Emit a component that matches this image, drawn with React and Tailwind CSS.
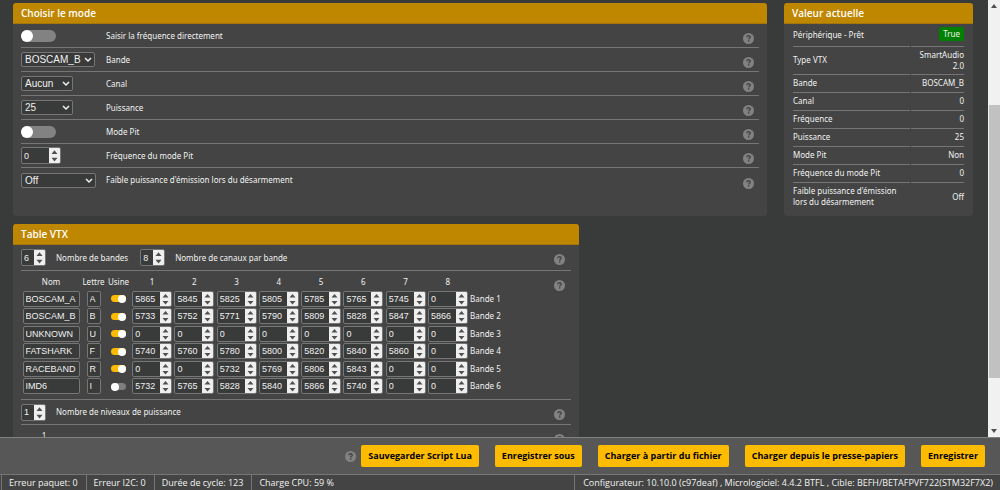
import { useState } from 'react';

const BANDS = [
    { name: 'BOSCAM_A', letter: 'A', factory: true, freqs: [5865, 5845, 5825, 5805, 5785, 5765, 5745, 0] },
    { name: 'BOSCAM_B', letter: 'B', factory: true, freqs: [5733, 5752, 5771, 5790, 5809, 5828, 5847, 5866] },
    { name: 'UNKNOWN', letter: 'U', factory: true, freqs: [0, 0, 0, 0, 0, 0, 0, 0] },
    { name: 'FATSHARK', letter: 'F', factory: true, freqs: [5740, 5760, 5780, 5800, 5820, 5840, 5860, 0] },
    { name: 'RACEBAND', letter: 'R', factory: true, freqs: [0, 0, 5732, 5769, 5806, 5843, 0, 0] },
    { name: 'IMD6', letter: 'I', factory: false, freqs: [5732, 5765, 5828, 5840, 5866, 5740, 0, 0] },
];

const CURRENT = [
    ['Type VTX', 'SmartAudio 2.0'],
    ['Bande', 'BOSCAM_B'],
    ['Canal', '0'],
    ['Fréquence', '0'],
    ['Puissance', '25'],
    ['Mode Pit', 'Non'],
    ['Fréquence du mode Pit', '0'],
];

const field = 'border border-[#757675] rounded-[2px] bg-[#393a3a] text-[#f0f0f0] font-["Liberation_Sans",sans-serif]';

function Help() {
    return (
        <svg viewBox="0 0 12 12" className="w-[11px] h-[11px] shrink-0" role="img" aria-label="Aide">
            <circle cx="6" cy="6" r="6" fill="#818281" />
            <path d="M4.1 4.7C4.2 3.5 5 3 6 3c1.100 0 1.900.6 1.900 1.600C7.900 5.700 6.200 5.700 6.200 7" fill="none" stroke="#434443" strokeWidth="1.500" />
            <rect x="5.400" y="7.900" width="1.600" height="1.500" fill="#434443" />
        </svg>
    );
}

function Toggle({ id, label, defaultChecked = false, small = false }) {
    return (
        <input
            id={id}
            type="checkbox"
            role="switch"
            aria-label={label}
            defaultChecked={defaultChecked}
            className={
                small
                    ? 'appearance-none block mx-auto w-[15px] h-[7px] rounded-full bg-[#7d7e7d] checked:bg-[#ffbb00] before:content-[""] before:block before:w-2 before:h-2 before:rounded-full before:bg-white checked:before:ml-[7px]'
                    : 'appearance-none block w-[35px] h-[12px] rounded-full bg-[#818281] checked:bg-[#ffbb00] before:content-[""] before:block before:w-[12px] before:h-[12px] before:rounded-full before:bg-white checked:before:ml-[23px]'
            }
        />
    );
}

function Select({ id, options, className }) {
    return (
        <div className={`relative ${className}`}>
            <select id={id} className={`${field} block appearance-none w-full h-[15px] pl-[3px] text-[10px] leading-[13px]`}>
                {options.map((o) => (
                    <option key={o}>{o}</option>
                ))}
            </select>
            <svg viewBox="0 0 8 6" className="absolute right-[3px] top-[5px] w-[8px] h-[6px] pointer-events-none">
                <path d="M1 1l3 3 3-3" fill="none" stroke="#f0f0f0" strokeWidth="1.500" />
            </svg>
        </div>
    );
}

function NumberInput({ id, label, value, className }) {
    const [val, setVal] = useState(value);

    return (
        <div className={`${field} flex overflow-hidden ${className}`}>
            <input
                id={id}
                type="number"
                aria-label={label}
                value={val}
                onChange={(e) => setVal(e.target.value)}
                className="appearance-none [-moz-appearance:textfield] [&::-webkit-inner-spin-button]:appearance-none flex-1 min-w-0 h-full pl-[2px] text-[9px] bg-transparent outline-none"
            />
            <svg viewBox="0 0 11 14" preserveAspectRatio="none" className="w-[11px] h-full shrink-0 bg-[#efefef]">
                <path d="M2.500 5.500L5.500 2 8.500 5.500zM2.500 9L5.500 12.500 8.500 9z" fill="#505050" />
            </svg>
        </div>
    );
}

function Panel({ title, className, children }) {
    return (
        <section className={`rounded-[3px] bg-[#434443] overflow-hidden ${className}`}>
            <h2 className='h-[21px] px-2 flex items-center bg-[#bf8600] border-b border-[#a37606] text-[10px] font-semibold font-["Open_Sans",sans-serif] text-white'>{title}</h2>
            <div className="px-2">{children}</div>
        </section>
    );
}

function ModeRow({ id, label, children, last }) {
    return (
        <div className={`h-[24px] flex items-center ${last ? '' : 'border-b border-[#757675]'}`}>
            <div className="w-[85px] shrink-0">{children}</div>
            <label htmlFor={id} className="flex-1">{label}</label>
            <div className="pt-[6px] pr-[5px]"><Help /></div>
        </div>
    );
}

function ModePanel() {
    return (
        <Panel title="Choisir le mode" className="flex-[754] h-[213px]">
            <ModeRow id="direct" label="Saisir la fréquence directement"><Toggle id="direct" /></ModeRow>
            <ModeRow id="band" label="Bande"><Select id="band" className="w-[74px]" options={['BOSCAM_B', 'BOSCAM_A', 'FATSHARK']} /></ModeRow>
            <ModeRow id="channel" label="Canal"><Select id="channel" className="w-[52px]" options={['Aucun', '1', '2']} /></ModeRow>
            <ModeRow id="power" label="Puissance"><Select id="power" className="w-[52px]" options={['25', '200']} /></ModeRow>
            <ModeRow id="pit" label="Mode Pit"><Toggle id="pit" /></ModeRow>
            <ModeRow id="pitfreq" label="Fréquence du mode Pit"><NumberInput id="pitfreq" value={0} className="w-[40px] h-[17px]" /></ModeRow>
            <ModeRow id="disarm" label="Faible puissance d'émission lors du désarmement" last>
                <Select id="disarm" className="w-[75px]" options={['Off', 'On']} />
            </ModeRow>
        </Panel>
    );
}

function CurrentPanel() {
    const line = 'border-b border-[#757675] pb-[2px]';
    return (
        <Panel title="Valeur actuelle" className="flex-[189] h-[213px]">
            <table className="w-full table-fixed border-separate border-spacing-x-[1px] border-spacing-y-0 leading-[11px]">
                <colgroup>
                    <col className="w-[69%]" />
                    <col />
                </colgroup>
                <tbody>
                    <tr className="h-[23px]">
                        <td className={line}>Périphérique - Prêt</td>
                        <td className={`${line} text-right`}>
                            <span className="inline-block rounded-[2px] bg-[#008000] px-[4px] leading-[14px]">True</span>
                        </td>
                    </tr>
                    {CURRENT.map(([label, value], i) => (
                        <tr key={label} className={i === 0 ? 'h-[28px]' : 'h-[18px]'}>
                            <td className={line}>{label}</td>
                            <td className={`${line} text-right`}>{value}</td>
                        </tr>
                    ))}
                    <tr className="h-[26px]">
                        <td>Faible puissance d'émission lors du désarmement</td>
                        <td className="text-right">Off</td>
                    </tr>
                </tbody>
            </table>
        </Panel>
    );
}

function TablePanel() {
    return (
        <Panel title="Table VTX" className="w-[59%] h-[400px]">
            <div className="h-[26px] flex items-center border-b border-[#757675]">
                <NumberInput id="bands" value={6} className="w-[25px] h-[17px]" />
                <label htmlFor="bands" className="ml-[10px] mr-[12px]">Nombre de bandes</label>
                <NumberInput id="channels" value={8} className="w-[25px] h-[17px]" />
                <label htmlFor="channels" className="ml-[10px] flex-1">Nombre de canaux par bande</label>
                <div className="pt-[4px] pr-[6px]"><Help /></div>
            </div>

            <div className="flex justify-between border-b border-[#757675] pt-[3px] pb-[4px]">
                <table className="table-fixed w-[490px] h-[121px] text-center">
                    <colgroup>
                        <col className="w-[60px]" />
                        <col className="w-[25px]" />
                        <col className="w-[25px]" />
                        <col span="8" />
                        <col className="w-[42px]" />
                    </colgroup>
                    <thead>
                        <tr className="h-[16px] whitespace-nowrap">
                            <th className="font-normal">Nom</th>
                            <th className="font-normal">Lettre</th>
                            <th className="font-normal">Usine</th>
                            {[1, 2, 3, 4, 5, 6, 7, 8].map((n) => (
                                <th key={n} className="font-normal">{n}</th>
                            ))}
                            <td />
                        </tr>
                    </thead>
                    <tbody>
                        {BANDS.map((band, i) => (
                            <tr key={band.name}>
                                <td>
                                    <input aria-label={`Nom ${i + 1}`} defaultValue={band.name} className={`${field} block mx-auto w-[57px] h-[16px] pl-[2px] text-[9px]`} />
                                </td>
                                <td>
                                    <input aria-label={`Lettre ${i + 1}`} defaultValue={band.letter} className={`${field} block mx-auto w-[14px] h-[16px] pl-[2px] text-[9px]`} />
                                </td>
                                <td>
                                    <Toggle small label={`Usine ${i + 1}`} defaultChecked={band.factory} />
                                </td>
                                {band.freqs.map((f, n) => (
                                    <td key={n}>
                                        <NumberInput label={`Bande ${i + 1} canal ${n + 1}`} value={f} className="mx-auto w-[40px] h-[16px]" />
                                    </td>
                                ))}
                                <td className="text-left pl-px whitespace-nowrap">Bande {i + 1}</td>
                            </tr>
                        ))}
                    </tbody>
                </table>
                <div className="pt-[6px] pr-[6px]"><Help /></div>
            </div>

            <div className="h-[25px] flex items-center border-b border-[#757675]">
                <NumberInput id="levels" value={1} className="w-[25px] h-[17px]" />
                <label htmlFor="levels" className="ml-[10px] flex-1">Nombre de niveaux de puissance</label>
                <div className="pt-[4px] pr-[6px]"><Help /></div>
            </div>
            <div className="flex justify-between pt-[5px] pr-[6px]">
                <span className="w-[46px] text-center">1</span>
                <div className="pt-[4px]"><Help /></div>
            </div>
        </Panel>
    );
}

function ScrollBar() {
    return (
        <div className="w-[12px] shrink-0 bg-[#f1f1f1] flex flex-col items-center py-[4px]">
            <svg viewBox="0 0 6 4" className="w-[6px] h-[4px]"><path d="M0 4L3 0 6 4z" fill="#505050" /></svg>
            <div className="flex-[97]" />
            <div className="flex-[273] w-[11px] bg-[#c1c1c1]" />
            <div className="flex-[51]" />
            <svg viewBox="0 0 6 4" className="w-[6px] h-[4px]"><path d="M0 0L3 4 6 0z" fill="#505050" /></svg>
        </div>
    );
}

function Footer() {
    return (
        <footer className='shrink-0 text-[9px] font-["Open_Sans",sans-serif]'>
            <div className="h-[37px] pr-[15px] flex items-center justify-end gap-[16px] border-t border-[#818281] bg-[#565756]">
                <div className="flex items-center gap-[5px]">
                    <Help />
                    <Button>Sauvegarder Script Lua</Button>
                </div>
                <Button>Enregistrer sous</Button>
                <Button>Charger à partir du fichier</Button>
                <Button>Charger depuis le presse-papiers</Button>
                <Button>Enregistrer</Button>
            </div>
            <div className="h-[16px] pl-px flex border-t border-[#757675] bg-[#434443] whitespace-nowrap leading-[15px]">
                {['Erreur paquet: 0', 'Erreur I2C: 0', 'Durée de cycle: 123', 'Charge CPU: 59 %'].map((s) => (
                    <span key={s} className="pl-[7px] pr-[8px] border-l border-[#757675]">{s}</span>
                ))}
                <span className="ml-auto pl-[8px] pr-[7px] border-l border-[#757675]">
                    Configurateur: 10.10.0 (c97deaf) , Micrologiciel: 4.4.2 BTFL , Cible: BEFH/BETAFPVF722(STM32F7X2)
                </span>
            </div>
        </footer>
    );
}

function Button({ children }) {
    return (
        <button type="button" className="h-[22px] px-[7px] rounded-[2px] bg-[#ffbb00] text-[9px] font-bold text-black whitespace-nowrap">
            {children}
        </button>
    );
}

export default function App() {
    return (
        <div className='h-screen flex flex-col bg-[#393b3a] text-[#f2f2f2] text-[8px] leading-[12px] font-["Noto_Sans",sans-serif]'>
            <div className="flex-1 min-h-0 flex">
                <main className="flex-1 min-w-0 overflow-hidden pl-[13px] pr-[15px] pt-[3px]">
                    <div className="flex gap-[17px] mb-[8px]">
                        <ModePanel />
                        <CurrentPanel />
                    </div>
                    <TablePanel />
                </main>
                <ScrollBar />
            </div>
            <Footer />
        </div>
    );
}
